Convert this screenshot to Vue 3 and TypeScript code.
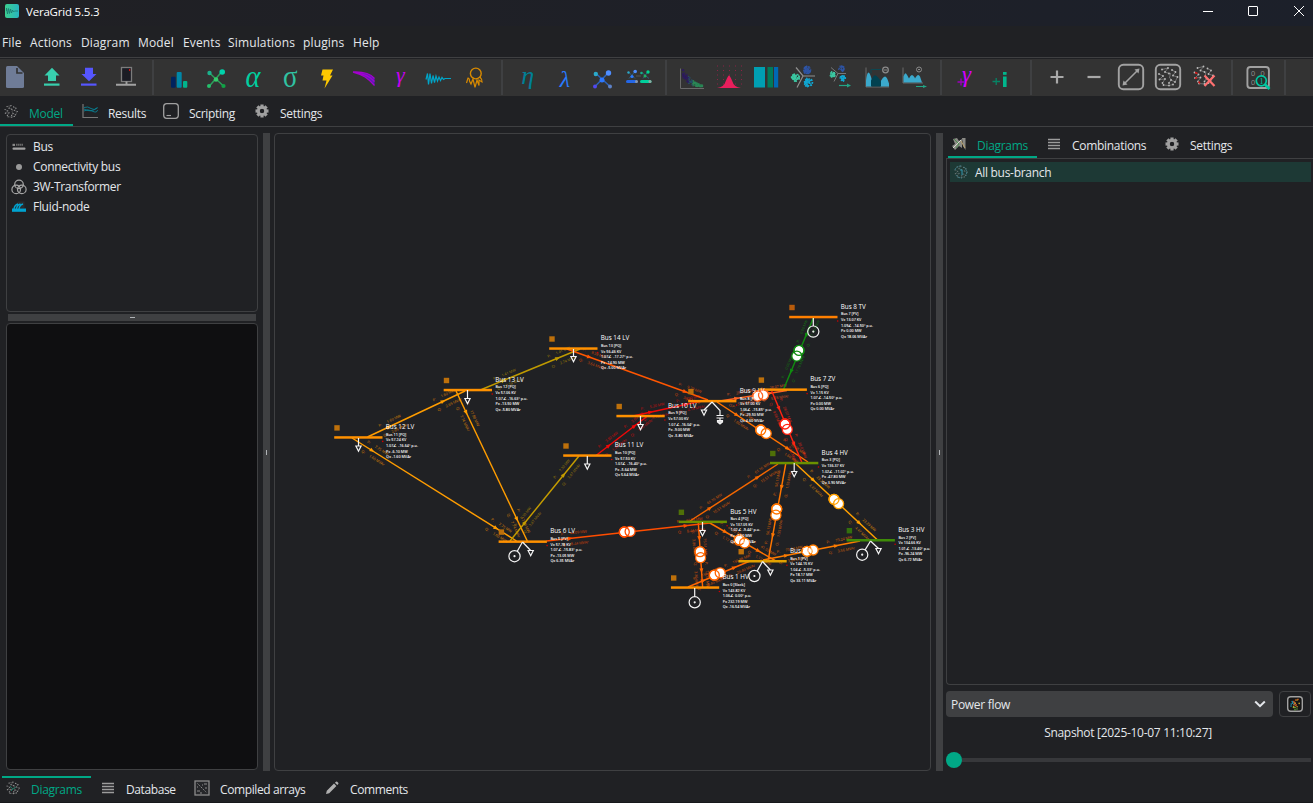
<script setup lang="ts">
type Pt = [number, number]

interface Bus {
  name: string
  x: number
  y: number
  color: string
  square?: string
  lines: string[]
}

interface Branch {
  a: Pt
  b: Pt
  color: string
  trafo?: [Pt, Pt]
  p: string
  q: string
}

const menus: { label: string; w: number }[] = [
  { label: 'File', w: 28 },
  { label: 'Actions', w: 51 },
  { label: 'Diagram', w: 57 },
  { label: 'Model', w: 45 },
  { label: 'Events', w: 45 },
  { label: 'Simulations', w: 75 },
  { label: 'plugins', w: 50 },
  { label: 'Help', w: 40 },
]

// Deterministic noise for the speckled icons
function noise(seed: number) {
  let s = seed
  return () => {
    s = (s * 16807) % 2147483647
    return s / 2147483647
  }
}

function cluster(cx: number, cy: number, r: number, n: number, fill: string, seed: number): string {
  const rnd = noise(seed)
  for (let i = 0; i < 5; i++) rnd()
  let out = ''
  for (let i = 0; i < n; i++) {
    const a = rnd() * 6.283
    const d = Math.sqrt(rnd()) * r
    out += `<circle cx="${(cx + Math.cos(a) * d).toFixed(1)}" cy="${(cy + Math.sin(a) * d).toFixed(1)}" r=".8" fill="${fill}"/>`
  }
  return out
}

function scatter(): string {
  const rnd = noise(77)
  let out = ''
  for (let i = 0; i < 150; i++) {
    const t = rnd()
    const x = -9.5 + t * 20
    const y = 8.5 - 13 * Math.pow(1 - t, 2) + (rnd() - 0.5) * (2 + 7 * (1 - t))
    const c = t < 0.3 ? '#2d1b60' : t < 0.5 ? '#27506b' : '#2c8a58'
    out += `<circle cx="${x.toFixed(1)}" cy="${Math.min(9, y).toFixed(1)}" r=".8" fill="${c}" opacity=".75"/>`
  }
  return out
}

function grid(): string {
  let out = ''
  for (let x = -12; x <= 13; x += 6) for (let y = -12; y <= 9; y += 4.5) out += `<rect x="${x}" y="${y}" width="1" height="1" fill="#8c2346"/>`
  return out
}

const wires =
  '<path d="M-6 -7.500L0 -9L-3 -5L1 -3.500M4 -7L7.500 -5L5 -1.500L9.500 0L7 5L3 3L1 6M-9 -3L-5 -1L-8.500 2.500L-3 2L-5.500 6M-4.500 8L1 8.500L5 7.500M2.500 -4L1.500 1L4 3" fill="none" stroke="#8a8a8a" stroke-width=".7"/>' +
  [[-6, -7.5], [0, -9], [-3, -5], [1, -3.5], [4, -7], [7.5, -5], [5, -1.5], [9.5, 0], [7, 5], [3, 3], [1, 6], [-9, -3], [-5, -1], [-8.5, 2.5], [-3, 2], [-5.5, 6], [-4.5, 8], [1, 8.5], [5, 7.5]]
    .map(([x, y]) => `<circle cx="${x}" cy="${y}" r=".9" fill="#bdbdbd"/>`)
    .join('')

const glyph = (t: string, x: number, y: number, size: number, fill: string, style = 'italic') =>
  `<text x="${x}" y="${y}" font-family="Liberation Serif, serif" font-style="${style}" font-size="${size}" fill="${fill}" text-anchor="middle">${t}</text>`

const icons: Record<string, string> = {
  file: '<path d="M-7.500 -11.500H2L9 -4.500V9A1.500 1.500 0 0 1 7.500 10.500H-7.500A1.500 1.500 0 0 1 -9 9V-10A1.500 1.500 0 0 1 -7.500 -11.500Z" fill="#6f7c97"/><path d="M2 -9.500V-4.500H7.500" fill="none" stroke="#333" stroke-width="1.700"/>',
  open: '<path d="M0 -9.800L7.500 -2H4V3.500H-4V-2H-7.500Z" fill="#38cfae"/><rect x="-8" y="6" width="15.500" height="2.200" fill="#38cfae"/>',
  save: '<path d="M-4 -9.800H4V-3.500H7.500L0 3.800L-7.500 -3.500H-4Z" fill="#5656ff"/><rect x="-8" y="6" width="15.500" height="2.200" fill="#5656ff"/>',
  device: '<rect x="-4.500" y="-10" width="10" height="14" fill="#1b1c24" stroke="#7c7c7c" stroke-width="1.300"/><path d="M.500 4V7.200M-10 7.200H10" stroke="#a2a2a2" stroke-width="1.900"/><rect x="3" y="-8.500" width="1.200" height="2" fill="#d01010"/>',
  bars: '<rect x="-8" y="-.800" width="4.700" height="11" rx="1" fill="#00235e"/><rect x="-2.300" y="-5.500" width="5" height="15.700" rx="1" fill="#0087a8"/><rect x="4" y="3.500" width="4.300" height="6.700" rx="1" fill="#00b48c"/>',
  netGreen: '<path d="M-7 -5L8 9M6 -6L-7 9" stroke="#2c9f5b" stroke-width="1.500"/><circle cx="-6.500" cy="-4.500" r="2.200" fill="#1bb18c"/><circle cx="6.200" cy="-5.500" r="2.800" fill="#00d2ab"/><circle cx="0" cy="2" r="2.300" fill="#33cc6b"/><circle cx="-7" cy="8.500" r="2" fill="#25c06c"/><circle cx="7.500" cy="8.500" r="2.100" fill="#0fa345"/>',
  alpha: '<g transform="scale(.94 1.080)">' + glyph('α', 0, 9, 30, '#00cfa0') + '</g>',
  sigma: '<g transform="scale(.9 1.050)">' + glyph('σ', 0.3, 9, 30, '#30c2a2', 'normal') + '</g>',
  bolt: '<path d="M-4.500 -8H6L3 -2H5.500L-2.500 11L-.500 3H-4.500L-3.500 -2H-6Z" fill="#ffc900"/>',
  fan: '<path d="M-11 -5.500C0 -6 7 -3 10.500 1V8C4 1 -1 -3 -11 -5.500Z" fill="#5a1fb8"/><path d="M-11 -5.500C0 -6 7 -3 10.500 1M-11 -5.500C0 -4 7 0 10.500 4M-11 -5.500C-1 -3 4 1 10.500 8" fill="none" stroke="#a400cf" stroke-width="1.300"/>',
  gamma: glyph('γ', -0.7, 4.5, 22, '#c800f0'),
  wave: '<path d="M-12 1L-10.500 -5L-9.500 6L-8 -5L-6.500 5L-5 -3L-3.500 4L-2 -2.500L-.500 2.500L1 -1.500L2.500 2L4 -1L5.500 1L7 0H13" transform="translate(0 1)" fill="none" stroke="#00a5c8" stroke-width="1.200"/>',
  sensor: '<circle cx=".800" cy="-4" r="5.400" fill="none" stroke="#d88a00" stroke-width="1.400"/><path d="M-8.500 5.500L-7 .500Q-5.500 .500 -5.500 3.500L-4 6.500L-2 1.500L0 9.800L2 2.500L4 8L4 2.500L7 4.500Q7 1.500 5 -.500" fill="none" stroke="#d88a00" stroke-width="1.200"/>',
  eta: glyph('η', -0.3, 6.8, 26, '#007f96'),
  lambda: glyph('λ', 0, 9.3, 24, '#287bff', 'italic'),
  netBlue: '<path d="M-6 -4L8 9M6.500 -5L-7 9" stroke="#2d62b8" stroke-width="1.500"/><circle cx="-6.200" cy="-3.500" r="2.200" fill="#2ba9c9"/><circle cx="6.500" cy="-4.500" r="2.700" fill="#4e8dff"/><circle cx="0" cy="2.500" r="2.500" fill="#2d78ff"/><circle cx="-7" cy="9" r="2" fill="#5148ef"/><circle cx="8" cy="9" r="2" fill="#5d82c8"/>',
  netPair: '<path d="M-10 -5L-4 1M-4 -6L-10 1M4 -4L10 1M9 -6L4 1" stroke="#2c5e80" stroke-width="1"/><circle cx="-10.500" cy="-5" r="1.200" fill="#2ba9c9"/><circle cx="-3.800" cy="-6" r="1.800" fill="#4e8dff"/><circle cx="-7" cy="-1" r="1.600" fill="#2d78ff"/><circle cx="2.500" cy="-4.500" r="1.300" fill="#14b08a"/><circle cx="9" cy="-5.500" r="1.700" fill="#00d28f"/><circle cx="6" cy="-1.500" r="1.500" fill="#20b060"/><path d="M-3 -1.500H2" stroke="#555"/><rect x="-13" y="2.500" width="11.500" height="3" rx="1.500" fill="#2467e8"/><rect x="-4" y="2.500" width="3" height="3" rx="1.500" fill="#8896aa"/><rect x="1" y="2.500" width="11.500" height="3" rx="1.500" fill="#00d09c"/><rect x="9.500" y="2.500" width="3" height="3" rx="1.500" fill="#8fa9a2"/>',
  scatter: '<path d="M-11.500 -9V11H12" fill="none" stroke="#6a6a6a" stroke-width="1"/>' + scatter(),
  bell: grid() + '<path d="M-12 10.500Q-5 10 -3 3Q-.800 -2 0 -2T3 3Q5 10 12 10.500Z" fill="#e91e5c"/>',
  blocks: '<rect x="-12" y="-10.500" width="11" height="20.500" fill="#009fb2"/><rect x="1.500" y="-10.500" width="5.500" height="20.500" fill="#007a5a"/><rect x="8" y="-10.500" width="4.200" height="20.500" fill="#0068b4"/>',
  clusters: '<path d="M-7 -10L0 -1.500H12M0 -1.500L-6 10" fill="none" stroke="#8f8f8f" stroke-width="1.200"/>' + cluster(4, -7.5, 4, 60, '#2f55a5', 50021) + cluster(-7.5, 0, 4, 60, '#3cc9a3', 90017) + cluster(5.5, 5, 4.5, 60, '#12a7d2', 130003),
  clustersTime: '<path d="M-9 -10L-2 -4H6M-2 -4L-6 4" fill="none" stroke="#777" stroke-width="1"/>' + cluster(1.5, -9, 2.8, 26, '#2f55a5', 150011) + cluster(-7.5, -3, 2.8, 34, '#3cc9a3', 190027) + cluster(2.5, 1, 3, 34, '#12a7d2', 230003) + '<path d="M-1 8H8" stroke="#22a586" stroke-width="1.200"/><path d="M7 6L11 8L7 10Z" fill="#22a586"/>',
  peaks: '<path d="M-11 -10V9.500H12" fill="none" stroke="#6b6b6b"/><path d="M-11 9V3Q-10 -5 -8.500 -5T-5 3V9ZM3 9V5Q6 -1 8 -1T12 6V9Z" fill="#3ba9cc"/><path d="M-6 9V3Q-3 -3 -1.500 -2Q1 -1 4 4V9Z" fill="#014150"/><path d="M-6 -4V-8H4" fill="none" stroke="#0e4650"/><circle cx="8.500" cy="-7.500" r="2.800" fill="none" stroke="#8a8a8a" stroke-width="1.300"/><path d="M7 -7.500H10" stroke="#8a8a8a"/>',
  peaksTime: '<path d="M-11 -10V5.500H9" fill="none" stroke="#6b6b6b"/><path d="M-10.500 5V-1Q-9 -5 -8 -4T-5 1Q-3 -4 -1 -2T1 1Q4 -5 6 -1L8 5Z" fill="#3ba9cc"/><circle cx="5" cy="-8" r="2.500" fill="none" stroke="#8a8a8a"/><path d="M4 -8H6" stroke="#8a8a8a"/><path d="M2 9H10" stroke="#22a586"/><path d="M9 7.500L13 9L9 10.500Z" fill="#22a586"/>',
  plusGamma: '<path d="M-9.500 4.500H-2.500M-6 1V8" stroke="#9d00bd" stroke-width="1.300"/>' + glyph('γ', -0.5, 4.2, 23, '#d400ff'),
  plusI: '<path d="M-11.500 4H-4M-7.800 .500V7.500" stroke="#078465" stroke-width="1.300"/><rect x="-1" y="-5.500" width="3.600" height="2.800" fill="#00b68c"/><path d="M-1 -1H2.600V9.500H-1Z" fill="#00b68c"/>',
  plus: '<path d="M-6.500 -.500H6.500M0 -7V6" stroke="#a9a9a9" stroke-width="2.200"/>',
  minus: '<path d="M-6.500 -.500H6.500" stroke="#a9a9a9" stroke-width="2.200"/>',
  resize: '<rect x="-12.200" y="-12.700" width="24.400" height="24.400" rx="4.500" fill="none" stroke="#a2a2a2" stroke-width="1.900"/><path d="M-6.500 6L6.500 -7" stroke="#a2a2a2" stroke-width="1.600"/><path d="M8.500 -9L7.500 -4L3.500 -8ZM-8.500 8L-7.500 3L-3.500 7Z" fill="#a2a2a2"/>',
  graphBox: '<rect x="-12.200" y="-12.700" width="24.400" height="24.400" rx="4.500" fill="none" stroke="#a2a2a2" stroke-width="1.900"/><g transform="translate(0 -.5)">' + wires + '</g>',
  graphDelete: '<g transform="translate(-1.500 -2)">' + wires + '<path d="M-8.500 -3L-6 -2M-8.500 3L-6.500 2M-5 6L-3.500 8" stroke="#d01818" stroke-width="1.500"/></g><path d="M-.500 -2L9.500 8.500M9.500 -2L-.500 8.500" stroke="#ff7070" stroke-width="2.200"/>',
  inspect: '<rect x="-10.600" y="-10.500" width="21.500" height="21" rx="3" fill="none" stroke="#a2a2a2" stroke-width="1.900"/><g font-family="Liberation Sans, sans-serif" font-size="7.500" fill="#8d8d8d"><text x="-7" y="-1.500">0</text><text x="2.500" y="-1.500">0</text><text x="-7" y="7">0</text></g><circle cx="3.300" cy="3.300" r="5" fill="#26302f" stroke="#00c8a2" stroke-width="1.700"/><path d="M7 7L11.500 11.500" stroke="#00c8a2" stroke-width="2.600"/><text x="1.400" y="6.200" font-family="Liberation Serif, serif" font-size="8" fill="#00c8a2">1</text>',
  orb: '<g transform="translate(0 .5) scale(.66)" opacity=".8">' + wires + '</g>',
  orbBlue: '<g transform="scale(.66)" opacity=".5">' + wires + '</g><path d="M-6 -2Q-5 -6 0 -6M3 -5Q7 -2 5 4M-5 3Q-3 6 1 6" stroke="#3f7f8c" stroke-width=".9" stroke-dasharray="2 1" fill="none"/><path d="M-1 -2H1V3" stroke="#2b91a8" stroke-width="1" fill="none"/>',
  orbGreen: '<g transform="scale(.66)" opacity=".8">' + wires + '</g><path d="M-3 -2L0 1L3 -1M-2 3L0 1" stroke="#1a9b7c" stroke-width=".8" opacity=".8" fill="none"/>',
  orbBox: '<rect x="-7.300" y="-7.300" width="14.600" height="14.600" rx="3" fill="#161616" stroke="#a2a2a2" stroke-width="1.400"/>' + cluster(-3, 0, 3, 9, '#238ea8', 311103) + cluster(1.5, -1.5, 4.2, 9, '#c4501e', 533307) + cluster(0, 3, 3, 5, '#62a33e', 937701) + cluster(1.5, 0, 4.5, 5, '#caa52c', 774103),
  chart: '<path d="M-7 -7V6.500H8" fill="none" stroke="#777" stroke-width="1.200"/><path d="M-6 -3.500Q-2 -5 1 -2.500T7.500 -3.500M-6 0Q-3 -2.500 2 0T7.500 -1M-6 -2Q0 2 7.500 -3" fill="none" stroke="#087f92" stroke-width=".9"/>',
  terminal: '<rect x="-7.300" y="-7.300" width="14.600" height="14.600" rx="3" fill="none" stroke="#a0a0a0" stroke-width="1.300"/><path d="M-4.500 4.500H0" stroke="#a0a0a0" stroke-width="1.100"/>',
  gear:
    Array.from({ length: 8 }, (_, i) => `<rect x="-1.600" y="-6.500" width="3.200" height="4" fill="#a0a0a0" transform="rotate(${i * 45})"/>`).join('') +
    '<circle r="3.700" fill="none" stroke="#a0a0a0" stroke-width="2.800"/>',
  lines: '<path d="M-6 -4.500H6M-6 -1.500H6M-6 1.500H6M-6 4.500H6" stroke="#9c9c9c" stroke-width="1.300"/>',
  map: '<path d="M-6 -5L-2 -6L0 -3L3 -5V4L0 2L-4 6L-7 2L-4 0ZM3 -6L6.500 -6V6L4 2Z" fill="#8b8b86"/><path d="M-5 -5L0 0L-3 4" fill="none" stroke="#4f8d52"/><path d="M2 -3L6 4" stroke="#b9a16a"/><path d="M-6 4L2 -4" stroke="#d6d6ce" stroke-width="1"/>',
  matrix: '<rect x="-7" y="-7" width="14" height="14" fill="#26272a" stroke="#8c8c8c" stroke-width="1.300"/><path d="M-4.500 -4.500L4.500 4.500" stroke="#8c8c8c" stroke-dasharray="1.500 1"/><path d="M2 -4H5M-5 3H-2M-5 -1H-4M0 -3H1M3 0H5M-2 5H0" stroke="#8c8c8c" stroke-width="1"/>',
  pencil: '<path d="M-6 6L-5.200 2.800L2 -4.400L4.400 -2L-2.800 5.200ZM2.900 -5.300L4 -6.300Q4.600 -6.700 5.200 -6.200L6.200 -5.200Q6.700 -4.600 6.300 -4L5.300 -2.900Z" fill="#b0b0b0"/>',
  bus: '<rect x="-6.500" y=".500" width="13" height="2.300" rx="1" fill="#a0a0a0"/><rect x="-6.500" y="-3.200" width="2.500" height="2.200" fill="#888"/><path d="M-3 -2.200H4" stroke="#6a6a6a" stroke-width="2" stroke-dasharray="1.600 .4"/>',
  dot: '<circle r="3" fill="#9a9a9a"/>',
  trafo3: '<g fill="none" stroke="#a6a6a6" stroke-width="1.200"><circle cy="-2.600" r="4.300"/><circle cx="-2.800" cy="2.400" r="4.300"/><circle cx="2.800" cy="2.400" r="4.300"/></g>',
  fluid: '<path d="M-1 -5.500H5.500V1H-5Z" fill="#2b2d30"/><path d="M-7 1.500H7V4.800H-7Z" fill="#00a3d0"/><path d="M-5 2Q-4.500 -2 -1 -3M-2.500 2Q-2 -2 1.500 -3M0 2Q.500 -2 4 -3" fill="none" stroke="#00a3d0" stroke-width="1.400"/>',
}

const toolGroups: string[][] = [
  ['file', 'open', 'save', 'device'],
  ['bars', 'netGreen', 'alpha', 'sigma', 'bolt', 'fan', 'gamma', 'wave', 'sensor'],
  ['eta', 'lambda', 'netBlue', 'netPair'],
  ['scatter', 'bell', 'blocks', 'clusters', 'clustersTime', 'peaks', 'peaksTime'],
  ['plusGamma', 'plusI'],
  ['plus', 'minus', 'resize', 'graphBox', 'graphDelete'],
  ['inspect'],
]

const mainTabs = [
  { label: 'Model', icon: 'orb', w: 73 },
  { label: 'Results', icon: 'chart', w: 80 },
  { label: 'Scripting', icon: 'terminal', w: 91 },
  { label: 'Settings', icon: 'gear', w: 90 },
]
const sideTabs = [
  { label: 'Diagrams', icon: 'map', w: 89 },
  { label: 'Combinations', icon: 'lines', w: 118 },
  { label: 'Settings', icon: 'gear', w: 90 },
]
const bottomTabs = [
  { label: 'Diagrams', icon: 'orbGreen', w: 89 },
  { label: 'Database', icon: 'lines', w: 94 },
  { label: 'Compiled arrays', icon: 'matrix', w: 130 },
  { label: 'Comments', icon: 'pencil', w: 90 },
]
const library = [
  { label: 'Bus', icon: 'bus' },
  { label: 'Connectivity bus', icon: 'dot' },
  { label: '3W-Transformer', icon: 'trafo3' },
  { label: 'Fluid-node', icon: 'fluid' },
]

const OR = '#ff9100'
const buses: Bus[] = [
  { name: 'Bus 8 TV', x: 789.2, y: 317, color: '#ff7f00', square: '#b85c0c', lines: ['Bus 7 [PV]', 'V= 13.07 KV', '1.09∠ -14.50º p.u.', 'P= 0.00 MW', 'Q= 18.06 MVAr'] },
  { name: 'Bus 14 LV', x: 549.2, y: 348.5, color: OR, lines: ['Bus 13 [PQ]', 'V= 56.46 KV', '1.07∠ -17.27º p.u.', 'P= -14.90 MW', 'Q= -5.00 MVAr'] },
  { name: 'Bus 13 LV', x: 443.7, y: 390, color: OR, lines: ['Bus 12 [PQ]', 'V= 57.06 KV', '1.07∠ -16.63º p.u.', 'P= -13.50 MW', 'Q= -5.80 MVAr'] },
  { name: 'Bus 12 LV', x: 334.2, y: 437.4, color: OR, lines: ['Bus 11 [PQ]', 'V= 57.24 KV', '1.07∠ -16.64º p.u.', 'P= -6.10 MW', 'Q= -1.60 MVAr'] },
  { name: 'Bus 11 LV', x: 563.2, y: 455.5, color: OR, lines: ['Bus 10 [PQ]', 'V= 57.50 KV', '1.07∠ -16.40º p.u.', 'P= -5.64 MW', 'Q= 5.64 MVAr'] },
  { name: 'Bus 6 LV', x: 498.6, y: 541.6, color: OR, lines: ['Bus 5 [PV]', 'V= 57.78 KV', '1.07∠ -15.83º p.u.', 'P= -13.05 MW', 'Q= 6.35 MVAr'] },
  { name: 'Bus 10 LV', x: 616.4, y: 416, color: OR, lines: ['Bus 9 [PQ]', 'V= 57.00 KV', '1.07∠ -16.04º p.u.', 'P= -9.00 MW', 'Q= -5.80 MVAr'] },
  { name: 'Bus 9 LV', x: 688.1, y: 401.1, color: OR, lines: ['Bus 8 [PQ]', 'V= 57.00 KV', '1.06∠ -15.85º p.u.', 'P= -29.50 MW', 'Q= 4.60 MVAr'] },
  { name: 'Bus 7 ZV', x: 758.6, y: 389.6, color: OR, lines: ['Bus 6 [PQ]', 'V= 1.15 KV', '1.07∠ -14.50º p.u.', 'P= 0.00 MW', 'Q= 0.00 MVAr'] },
  { name: 'Bus 4 HV', x: 770, y: 463, color: '#6b9100', square: '#4f7008', lines: ['Bus 3 [PQ]', 'V= 136.37 KV', '1.02∠ -11.02º p.u.', 'P= -47.80 MW', 'Q= 3.90 MVAr'] },
  { name: 'Bus 5 HV', x: 678.6, y: 521.8, color: '#6b9100', square: '#4f7008', lines: ['Bus 4 [PQ]', 'V= 137.05 KV', '1.02∠ -9.44º p.u.', 'P= -7.60 MW', 'Q= -1.60 MVAr'] },
  { name: 'Bus 3 HV', x: 846.6, y: 540.2, color: '#3e8c08', square: '#33700d', lines: ['Bus 2 [PV]', 'V= 134.66 KV', '1.01∠ -13.40º p.u.', 'P= -96.24 MW', 'Q= 6.72 MVAr'] },
  { name: 'Bus 2 HV', x: 738.4, y: 561.2, color: '#e2a200', lines: ['Bus 1 [PV]', 'V= 144.15 KV', '1.04∠ -5.33º p.u.', 'P= 18.17 MW', 'Q= 33.11 MVAr'] },
  { name: 'Bus 1 HV', x: 670.9, y: 587.5, color: OR, lines: ['Bus 0 [Slack]', 'V= 143.82 KV', '1.06∠ 0.00º p.u.', 'P= 232.19 MW', 'Q= -16.54 MVAr'] },
]

const branches: Branch[] = [
  { a: [367.5, 437], b: [465, 391], color: '#ff9d00', p: '1.60 MW', q: '2.69 MVAr' },
  { a: [481.5, 389.5], b: [580, 349], color: '#bf9a00', p: '1.41 MW', q: '2.74 MVAr' },
  { a: [352, 438], b: [516.5, 541], color: '#ff9d00', p: '7.75 MW', q: '1.60 MVAr' },
  { a: [456, 391], b: [527.3, 541], color: '#ff9d00', p: '17.80 MW', q: '7.74 MVAr' },
  { a: [510, 541], b: [579, 456], color: '#c49c00', p: '7.30 MW', q: '3.47 MVAr' },
  { a: [596, 455.5], b: [647.5, 416], color: '#f00808', p: '3.80 MW', q: '1.36 MVAr' },
  { a: [633, 416], b: [704, 400.5], color: '#f00808', p: '5.20 MW', q: '4.18 MVAr' },
  { a: [567, 349], b: [708, 400], color: '#ff5600', p: '9.39 MW', q: '3.64 MVAr' },
  { a: [717, 402], b: [808, 462], color: '#ff7200', trafo: [[760.7, 430], [766.2, 433.5]], p: '16.08 MW', q: '1.60 MVAr' },
  { a: [720, 401], b: [787, 390.5], color: '#ff6524', trafo: [[757.7, 396], [763.5, 395]], p: '28.07 MW', q: '5.78 MVAr' },
  { a: [771.7, 391], b: [801.7, 462], color: '#ff2412', trafo: [[785, 424], [787.3, 429.4]], p: '28.07 MW', q: '9.68 MVAr' },
  { a: [813.3, 318], b: [783.5, 389.5], color: '#108c10', trafo: [[799, 350.4], [796.8, 356.1]], p: '0.00 MW', q: '17.16 MVAr' },
  { a: [690, 521], b: [778, 464], color: '#f46700', p: '61.16 MW', q: '15.51 MVAr' },
  { a: [785.7, 464], b: [768.3, 559.5], color: '#ff7600', trafo: [[776.7, 509], [775.9, 515.2]], p: '56.13 MW', q: '1.55 MVAr' },
  { a: [796, 464], b: [877, 539.5], color: '#ffa000', trafo: [[834, 499.3], [838.6, 503.7]], p: '23.29 MW', q: '4.47 MVAr' },
  { a: [763, 560], b: [860, 541], color: '#ff7c00', trafo: [[807, 551.3], [813.1, 550]], p: '73.24 MW', q: '3.56 MVAr' },
  { a: [709, 522.5], b: [775, 560.5], color: '#ff7000', trafo: [[739.3, 540], [744.6, 543]], p: '41.52 MW', q: '1.17 MVAr' },
  { a: [698.3, 522.5], b: [702.6, 587], color: '#ff6500', trafo: [[700, 551.7], [700.6, 557.7]], p: '75.51 MW', q: '3.86 MVAr' },
  { a: [688, 587], b: [750, 561], color: '#ff6500', trafo: [[714.3, 575.2], [720.2, 572.8]], p: '156.88 MW', q: '20.40 MVAr' },
  { a: [546.5, 541], b: [710, 523], color: '#ff4d00', trafo: [[624.3, 532], [630.1, 531.4]], p: '44.09 MW', q: '8.44 MVAr' },
]

interface EndLabel { x: number; y: number; rot: number; arrow: number; s: number }
function ends(br: Branch): EndLabel[] {
  const dx = br.b[0] - br.a[0]
  const dy = br.b[1] - br.a[1]
  const len = Math.hypot(dx, dy)
  const deg = (Math.atan2(dy, dx) * 180) / Math.PI
  const flip = Math.abs(deg) > 90 ? deg + 180 : deg
  const d = Math.min(24, len * 0.25)
  return [d, len - d].map((t, i) => ({ x: br.a[0] + (dx * t) / len, y: br.a[1] + (dy * t) / len, rot: flip, arrow: deg, s: i }))
}

const loads: Pt[][] = [
  [[573.5, 349], [573.5, 356.5]],
  [[467.5, 390], [467.5, 398.5]],
  [[358.5, 438], [358.5, 446]],
  [[587.3, 456], [587.3, 464]],
  [[640.5, 416], [640.5, 424.5]],
  [[702.5, 522], [702.5, 530.5]],
  [[794.2, 463], [794.2, 471.5]],
  [[522.5, 542], [530.7, 550.5]],
  [[712, 402], [704, 410]],
  [[762.5, 561.5], [770.4, 570]],
  [[870.5, 541], [878.5, 548.5]],
]
const gens: Pt[][] = [
  [[813.3, 318], [813.3, 331.6]],
  [[522.5, 542], [514.5, 556.2]],
  [[762.5, 561.5], [754.4, 576]],
  [[870.5, 541], [862.2, 554.7]],
  [[694.7, 588], [694.7, 602.3]],
]
const rim = 5.6
function stemEnd(g: Pt[]): Pt {
  const dx = g[1][0] - g[0][0]
  const dy = g[1][1] - g[0][1]
  const l = Math.hypot(dx, dy)
  return [g[1][0] - (dx / l) * rim, g[1][1] - (dy / l) * rim]
}
</script>

<template>
  <div class="window">
    <header class="titlebar">
      <svg class="logo" width="14" height="14" viewBox="0 0 14 14">
        <defs>
          <linearGradient id="lg" x1="0" x2="1"><stop offset="0" stop-color="#3ccf8f" /><stop offset="1" stop-color="#28b4c0" /></linearGradient>
        </defs>
        <rect width="14" height="14" rx="2" fill="url(#lg)" />
        <path d="M1.500 7V4L2.500 10L3.500 4.500L4.500 9.500L5.500 5L6.500 9L7.500 6L8.500 8L9.500 7H13" fill="none" stroke="#1c7770" stroke-width=".8" />
      </svg>
      <span class="title">VeraGrid 5.5.3</span>
      <svg class="winctl" width="105" height="12" viewBox="0 0 105 12" fill="none" stroke="#fff">
        <path d="M0 6.500H10" />
        <rect x="45.500" y="1.500" width="9" height="9" rx=".5" />
        <path d="M91 1L101 11M101 1L91 11" />
      </svg>
    </header>
    <nav class="menubar">
      <span v-for="m in menus" :key="m.label" :style="{ width: m.w + 'px' }">{{ m.label }}</span>
    </nav>
    <div class="toolbar">
      <div v-for="(g, i) in toolGroups" :key="i" class="group">
        <svg v-for="t in g" :key="t" class="tool" width="37" height="37" viewBox="-19 -18.5 37 37" v-html="icons[t]"></svg>
        <i class="sep"></i>
      </div>
    </div>
    <div class="tabs main">
      <div v-for="(t, i) in mainTabs" :key="t.label" class="tab" :class="{ on: i === 0 }" :style="{ width: t.w + 'px' }">
        <svg width="18" height="18" viewBox="-9 -9 18 18" v-html="icons[t.icon]"></svg><span>{{ t.label }}</span>
      </div>
    </div>

    <main class="body">
      <section class="left">
        <ul class="panel library">
          <li v-for="l in library" :key="l.label">
            <svg width="16" height="16" viewBox="-8 -8 16 16" v-html="icons[l.icon]"></svg><span>{{ l.label }}</span>
          </li>
        </ul>
        <div class="hsplit"><i></i></div>
        <div class="panel preview"></div>
      </section>
      <div class="vsplit"><i></i></div>
      <section class="panel canvas">
        <svg width="656" height="637" viewBox="275 134 656 637">
          <g v-for="(br, i) in branches" :key="'e' + i">
            <line :x1="br.a[0]" :y1="br.a[1]" :x2="br.b[0]" :y2="br.b[1]" :stroke="br.color" stroke-width="1.45" />
            <g v-for="e in ends(br)" :key="e.s" :fill="br.color">
              <path d="M-2.500 -2L2.500 0L-2.500 2Z" :transform="`translate(${e.x} ${e.y}) rotate(${e.arrow})`" />
              <g class="flow" :transform="`translate(${e.x} ${e.y}) rotate(${e.rot})`">
                <text x="-9" y="-4">P:</text><text x="0" y="-4">{{ br.p }}</text>
                <text x="-9" y="7">Q:</text><text x="0" y="7">{{ br.q }}</text>
              </g>
            </g>
          </g>
          <g v-for="b in buses" :key="b.name">
            <rect :x="b.x" :y="b.y - 1.200" width="48.300" height="2.500" :fill="b.color" />
            <rect :x="b.x + 0.100" :y="b.y - 12.200" width="5.400" height="5.400" :fill="b.square ?? '#bd700b'" />
            <circle :cx="b.x + 48.500" :cy="b.y + 4" r=".8" fill="#d00000" />
          </g>
          <g fill="none" stroke="#f4f4f4" stroke-width="1.200">
            <g v-for="(l, i) in loads" :key="'l' + i">
              <line :x1="l[0][0]" :y1="l[0][1]" :x2="l[1][0]" :y2="l[1][1]" />
              <path :d="`M${l[1][0] - 2.600} ${l[1][1]}h5.200l-2.600 5.200Z`" />
            </g>
            <g v-for="(g, i) in gens" :key="'g' + i">
              <line :x1="g[0][0]" :y1="g[0][1]" :x2="stemEnd(g)[0]" :y2="stemEnd(g)[1]" />
              <circle :cx="g[1][0]" :cy="g[1][1]" :r="rim" />
              <circle :cx="g[1][0]" :cy="g[1][1]" r=".5" />
            </g>
            <path d="M712 402L720 410.500V415M716.500 415.500H723.500M716.500 418H723.500M720 418V420" />
            <path d="M717.500 420.500H722.500V422L720 424L717.500 422Z" fill="#ddd" />
          </g>
          <g v-for="(br, i) in branches.filter((x) => x.trafo)" :key="'t' + i">
            <circle v-for="(c, k) in br.trafo" :key="k" :cx="c[0]" :cy="c[1]" r="5" fill="#fff" :stroke="br.color" stroke-width="1.300" />
            <circle :cx="br.trafo![0][0]" :cy="br.trafo![0][1]" r="5" fill="none" :stroke="br.color" stroke-width="1.300" />
          </g>
          <g v-for="b in buses" :key="'n' + b.name" class="buslabel">
            <text class="name" :x="b.x + 51.600" :y="b.y - 8.200">{{ b.name }}</text>
            <text v-for="(t, k) in b.lines" :key="k" :x="b.x + 51.800" :y="b.y - 1.600 + k * 5.600">{{ t }}</text>
          </g>
        </svg>
      </section>
      <div class="vsplit second"><i></i></div>
      <section class="right">
        <div class="tabs side">
          <div v-for="(t, i) in sideTabs" :key="t.label" class="tab" :class="{ on: i === 0 }" :style="{ width: t.w + 'px' }">
            <svg width="18" height="18" viewBox="-9 -9 18 18" v-html="icons[t.icon]"></svg><span>{{ t.label }}</span>
          </div>
        </div>
        <div class="diagrams">
          <div class="item">
            <svg width="16" height="16" viewBox="-8 -8 16 16" v-html="icons.orbBlue"></svg><span>All bus-branch</span>
          </div>
        </div>
        <div class="controls">
          <div class="combo">
            <span>Power flow</span>
            <svg width="12" height="8" viewBox="0 0 12 8"><path d="M1.200 1.500L6 6.200L10.800 1.500" fill="none" stroke="#e4e7eb" stroke-width="2" /></svg>
          </div>
          <div class="iconbtn"><svg width="18" height="18" viewBox="-9 -9 18 18" v-html="icons.orbBox"></svg></div>
        </div>
        <div class="snapshot">Snapshot [2025-10-07 11:10:27]</div>
        <div class="slider"><i class="knob"></i><i class="track"></i></div>
      </section>
    </main>

    <div class="tabs bottom">
      <div v-for="(t, i) in bottomTabs" :key="t.label" class="tab" :class="{ on: i === 0 }" :style="{ width: t.w + 'px' }">
        <svg width="18" height="18" viewBox="-9 -9 18 18" v-html="icons[t.icon]"></svg><span>{{ t.label }}</span>
      </div>
    </div>
  </div>
</template>

<style>
body { background: #202124; }
</style>

<style scoped>
.window {
  width: 1313px;
  height: 803px;
  display: flex;
  flex-direction: column;
  overflow: hidden;
  background: #202124;
  color: #e4e7eb;
  font: 12px/16px "Open Sans", "Noto Sans", sans-serif;
  letter-spacing: -0.3px;
  box-sizing: border-box;
  border-bottom: 1px solid #17181b;
}
.window * { box-sizing: border-box; }
span, .snapshot { white-space: nowrap; }
svg { display: block; flex: none; letter-spacing: 0; }
.titlebar {
  height: 26px;
  flex: none;
  display: flex;
  align-items: center;
  padding: 0 5px 4px;
  background: linear-gradient(90deg, #202024 0%, #1e2028 60%, #1c202a 100%);
}
.title { margin-left: 7px; padding-top: 1px; color: #fff; font-size: 11.5px; letter-spacing: -0.2px; }
.winctl { margin-left: auto; }
.menubar { height: 31px; flex: none; display: flex; align-items: center; padding: 2px 0 0 2px; letter-spacing: 0.15px; }
.menubar span { flex: none; }
.toolbar {
  height: 39px;
  flex: none;
  display: flex;
  border-top: 1px solid #3f4042;
  padding-top: 1px;
  background: linear-gradient(#202124 1px, #333 1px);
}
.group { display: flex; flex: none; }
.group:first-child { margin-left: -4px; }
.sep { width: 16px; height: 35px; margin-top: 1px; background: linear-gradient(90deg, transparent 8px, #3f4042 8px, #3f4042 10px, transparent 10px); }
.tabs { display: flex; flex: none; }
.tab { display: flex; align-items: center; flex: none; }
.tab svg { margin: 0 9px 0 2px; }
.tab.on { color: #00a886; }
.main { height: 31px; border-bottom: 1px solid #3f4042; }
.main .tab { padding: 5px 0 0; height: 30px; }
.main .tab svg { margin-top: -5px; }
.main .on { box-shadow: inset 0 -2px #00a886; }
.main .tab:nth-child(2) { padding-left: 6px; }
.main .tab:nth-child(3) { padding-left: 7px; }
.main .tab:nth-child(4) { padding-left: 7px; }
.body { height: 644px; flex: none; display: flex; padding-top: 6px; }
.left { width: 258px; padding: 1px 0 1px 6px; display: flex; flex-direction: column; flex: none; }
.panel { border: 1px solid #3f4042; border-radius: 4px; }
.library { height: 178px; margin: 0; padding: 2px 0 0 4px; list-style: none; flex: none; }
.library li { height: 20px; display: flex; align-items: center; gap: 6px; }
.hsplit { height: 7px; margin: 2px 2px; background: #3f4042; display: grid; place-items: center; flex: none; }
.hsplit i { width: 5px; height: 1px; background: #b0b3b6; }
.preview { flex: 1; background: #0f0f11; }
.vsplit { width: 7px; margin: 0 4px 0 5px; background: #3f4042; flex: none; display: grid; place-items: center; }
.vsplit i { width: 1px; height: 5px; background: #b0b3b6; }
.canvas { width: 657px; flex: none; overflow: hidden; }
.second { margin: 0 3px 0 5px; }
.right { flex: 1; min-width: 0; display: flex; flex-direction: column; }
.side { height: 26px; padding-left: 2px; border-bottom: 1px solid #3f4042; }
.side .tab { height: 25px; }
.side .tab span { padding-top: 1px; }
.side .tab svg { margin-top: -3px; }
.side .on { box-shadow: inset 0 -2px #00a886; }
.side .tab:nth-child(2) { padding-left: 6px; }
.side .tab:nth-child(3) { padding-left: 6px; }
.diagrams { height: 526px; flex: none; border: solid #3f4042; border-width: 0 0 1px 1px; border-radius: 0 0 0 4px; padding: 3px 2px 0 3px; }
.item { height: 20px; background: #1d3935; display: flex; align-items: center; padding-left: 3px; gap: 6px; }
.item span { padding-top: 2px; }
.controls { display: flex; gap: 6px; margin: 6px 2px 0 0; }
.combo { flex: 1; height: 26px; background: #3f4042; border-radius: 4px; display: flex; align-items: center; justify-content: space-between; padding: 0 7px 0 5px; }
.combo span { padding-top: 2px; }
.iconbtn { width: 32px; height: 26px; border: 1px solid #3f4042; border-radius: 4px; display: grid; place-items: center; }
.snapshot { text-align: center; margin: 8px 3px 0 0; }
.slider { height: 16px; margin: 11px 2px 0 0; display: flex; align-items: center; }
.knob { width: 16px; height: 16px; border-radius: 50%; background: #00a886; }
.track { flex: 1; height: 4px; background: #37383b; }
.bottom { padding: 5px 0 0 2px; height: 31px; }
.bottom .tab { height: 26px; padding-top: 2px; }
.bottom .tab svg { margin-top: -4px; }
.bottom .on { box-shadow: inset 0 2px #00a886; }
.bottom .tab:nth-child(n + 2) { padding-left: 6px; }
.bottom .tab:nth-child(n + 2) span { letter-spacing: -0.4px; }
.flow text { font-size: 3.7px; font-family: "Open Sans", sans-serif; opacity: 0.8; }
.buslabel text { font-family: "Open Sans", "Noto Sans", sans-serif; fill: #fff; font-size: 3.7px; font-weight: 600; }
.buslabel .name { font-size: 6.3px; font-weight: 400; }
</style>
